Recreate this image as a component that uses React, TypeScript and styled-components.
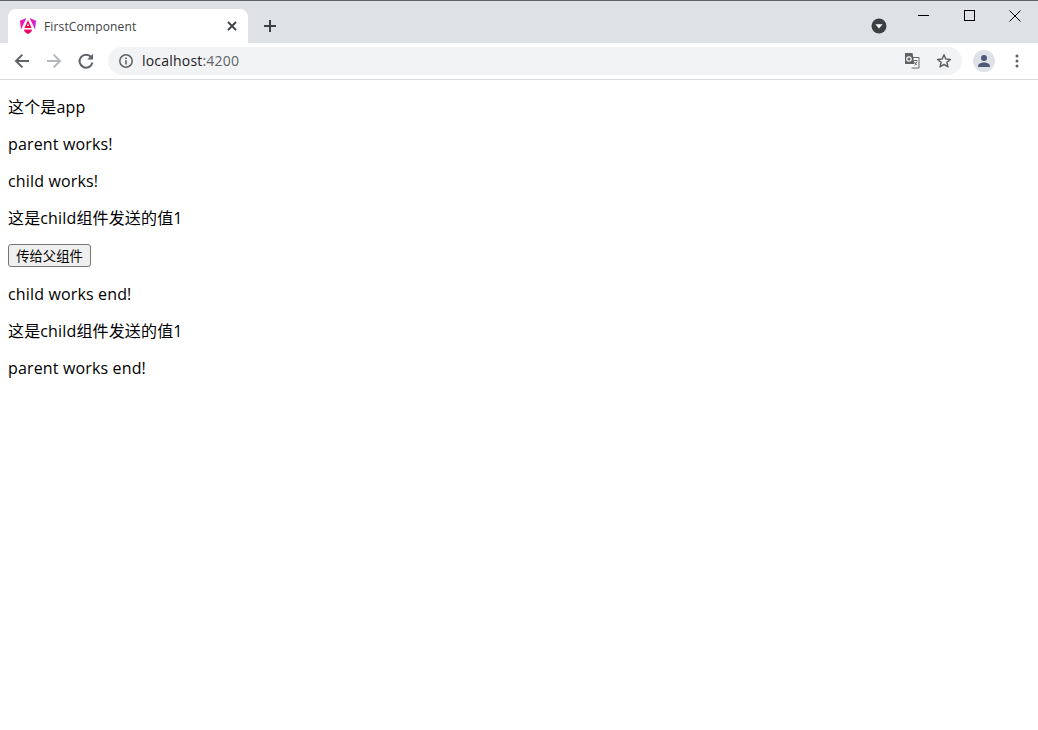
import styled, { createGlobalStyle } from "styled-components";

const GlobalStyle = createGlobalStyle`
  html, body {
    margin: 0;
    padding: 0;
    background: #fff;
  }
`;

const Browser = styled.div`
  width: 1038px;
  height: 730px;
  overflow: hidden;
  display: flex;
  flex-direction: column;
  background: #fff;
`;

const TabStrip = styled.div`
  height: 42px;
  flex: none;
  border-top: 1px solid #5f6368;
  background: #dee1e6;
  display: flex;
  align-items: flex-end;
  padding-left: 8px;
`;

const Tab = styled.div`
  width: 240px;
  height: 34px;
  background: #fff;
  border-radius: 8px 8px 0 0;
  display: flex;
  align-items: center;
  padding: 0 7px 0 11px;
  box-sizing: border-box;
  gap: 7px;
`;

const TabTitle = styled.span`
  flex: 1;
  font: 12px "Open Sans", "Liberation Sans", sans-serif;
  color: #3c4043;
  letter-spacing: 0.15px;
`;

const IconSlot = styled.span<{ $w?: number }>`
  width: ${(p) => p.$w ?? 18}px;
  height: 18px;
  flex: none;
  display: flex;
  align-items: center;
  justify-content: center;
`;

const NewTab = styled(IconSlot)`
  margin: 0 0 8px 13px;
`;

const StripRight = styled.div`
  margin-left: auto;
  align-self: stretch;
  display: flex;
  align-items: flex-start;
`;

const SearchTabs = styled(IconSlot)`
  margin: 16px 12px 0 0;
`;

const WindowButton = styled.span`
  width: 46px;
  height: 29px;
  display: flex;
  align-items: center;
  justify-content: center;
`;

const Toolbar = styled.div`
  height: 37px;
  flex: none;
  box-sizing: border-box;
  border-bottom: 1px solid #dadce0;
  display: flex;
  align-items: center;
  padding: 0 10px 0 13px;
  background: #fff;
`;

const NavGroup = styled.div`
  display: flex;
  align-items: center;
  gap: 14px;
`;

const Omnibox = styled.div`
  width: 854px;
  height: 28px;
  margin-left: 13px;
  border-radius: 14px;
  background: #f1f3f4;
  display: flex;
  align-items: center;
  padding: 0 10px;
  box-sizing: border-box;
`;

const Url = styled.span`
  flex: 1;
  margin-left: 8px;
  font: 14px/28px "Open Sans", "Liberation Sans", sans-serif;
  letter-spacing: 0.2px;
  color: #202124;
`;

const Port = styled.span`
  color: #5f6368;
`;

const OmniActions = styled.div`
  display: flex;
  align-items: center;
  gap: 16px;
`;

const Avatar = styled.span`
  width: 22px;
  height: 22px;
  margin-left: 11px;
  border-radius: 50%;
  background: #dee1e6;
  display: flex;
  align-items: center;
  justify-content: center;
  flex: none;
`;

const MenuDots = styled(IconSlot)`
  margin-left: 14px;
  width: 16px;
`;

const Page = styled.main`
  flex: 1;
  padding: 17px 8px 0;
  font-family: "Open Sans", "Noto Sans CJK SC", sans-serif;
  font-size: 16px;
  line-height: 21px;
  letter-spacing: 0.15px;
  color: #000;
`;

const Line = styled.p`
  margin: 0 0 16px;
`;

const SendButton = styled.button`
  display: block;
  width: 83px;
  height: 23px;
  margin: -1px 0 17px;
  padding: 0;
  border: 1px solid #767676;
  border-radius: 3px;
  background: #efefef;
  color: #000;
  font: 13.33px "Open Sans", "Noto Sans CJK SC", sans-serif;
`;

const AngularLogo = () => (
  <svg width="18" height="18" viewBox="0 0 18 18">
    <defs>
      <linearGradient id="ngWing" x1="0" y1="0" x2="1" y2="0">
        <stop offset="0" stopColor="#f5129f" />
        <stop offset="0.6" stopColor="#e91ec0" />
        <stop offset="1" stopColor="#9a2cf2" />
      </linearGradient>
      <linearGradient id="ngCore" x1="0" y1="1" x2="0" y2="0">
        <stop offset="0" stopColor="#e4003a" />
        <stop offset="1" stopColor="#f5128a" />
      </linearGradient>
    </defs>
    <path fill="url(#ngWing)" d="M1 3.8 7.4 1 2 12.6z" />
    <path fill="url(#ngWing)" d="M10.6 1 17 3.8 16 12.6z" />
    <path fill="url(#ngCore)" d="M9 3 12.6 11H5.4z" />
    <path fill="#fff" d="M9 6.6 7.9 9H10.1z" />
    <path fill="url(#ngCore)" d="M4.8 12.4H13.2L12.2 15 9 17 5.8 15z" />
  </svg>
);

const CloseTabIcon = () => (
  <svg width="12" height="12" viewBox="0 0 12 12">
    <path d="M2 2 10 10M10 2 2 10" stroke="#3c4043" strokeWidth="1.8" />
  </svg>
);

const PlusIcon = () => (
  <svg width="14" height="14" viewBox="0 0 14 14">
    <path d="M7 1V13M1 7H13" stroke="#3c4043" strokeWidth="2" />
  </svg>
);

const SearchTabsIcon = () => (
  <svg width="16" height="16" viewBox="0 0 16 16">
    <circle cx="8" cy="8" r="7.5" fill="#3c4043" />
    <path d="M4.4 6.3H11.6L8 10.6z" fill="#fff" />
  </svg>
);

const MinimizeIcon = () => (
  <svg width="11" height="11" viewBox="0 0 11 11">
    <path d="M0 5.5H11" stroke="#000" strokeWidth="1" />
  </svg>
);

const MaximizeIcon = () => (
  <svg width="11" height="11" viewBox="0 0 11 11">
    <rect x="0.5" y="0.5" width="10" height="10" fill="none" stroke="#000" />
  </svg>
);

const CloseWindowIcon = () => (
  <svg width="12" height="12" viewBox="0 0 12 12">
    <path d="M.5 .5 11.5 11.5M11.5 .5 .5 11.5" stroke="#000" strokeWidth="1" />
  </svg>
);

const ArrowIcon = ({ color, flip }: { color: string; flip?: boolean }) => (
  <svg width="18" height="18" viewBox="0 0 18 18">
    <g transform={flip ? "matrix(-1 0 0 1 18 0)" : undefined}>
      <path d="M16 9H3.5M9.4 2.6 3 9l6.4 6.4" fill="none" stroke={color} strokeWidth="2" />
    </g>
  </svg>
);

const ReloadIcon = () => (
  <svg width="18" height="18" viewBox="0 0 18 18">
    <path d="M14.2 5.2A6.5 6.5 0 1 0 15.4 10.5" fill="none" stroke="#5f6368" strokeWidth="2" />
    <path d="M16 1.8V7.6H10.2z" fill="#5f6368" />
  </svg>
);

const InfoIcon = () => (
  <svg width="16" height="16" viewBox="0 0 16 16">
    <circle cx="8" cy="8" r="6.2" fill="none" stroke="#5f6368" strokeWidth="1.5" />
    <path d="M7.2 7.2H8.8V11.5H7.2zM7.2 4.5H8.8V6H7.2z" fill="#5f6368" />
  </svg>
);

const TranslateIcon = () => (
  <svg width="16" height="16" viewBox="0 0 16 16">
    <path d="M6.5 4.5H15V15H7.5" fill="#fff" stroke="#5f6368" strokeWidth="1" />
    <path d="M1 0H8.5L10.5 11H1z" fill="#5f6368" />
    <circle cx="5" cy="6" r="2.2" fill="none" stroke="#fff" strokeWidth="1.2" />
    <path d="M10 7.5H13.5M11.8 7V8M10.6 12.5 13 8.5M10.6 9 13 12.5" stroke="#5f6368" strokeWidth="0.9" fill="none" />
  </svg>
);

const StarIcon = () => (
  <svg width="16" height="16" viewBox="0 0 16 16">
    <path
      d="M8 1.8 9.8 6l4.6.4-3.5 3 1.1 4.5L8 11.5 4 13.9l1.1-4.5-3.5-3L6.2 6z"
      fill="none"
      stroke="#5f6368"
      strokeWidth="1.5"
      strokeLinejoin="round"
    />
  </svg>
);

const PersonIcon = () => (
  <svg width="14" height="14" viewBox="0 0 14 14">
    <circle cx="7" cy="4" r="3" fill="#4d5a75" />
    <path d="M1 13C1 9.8 4 8.6 7 8.6S13 9.8 13 13z" fill="#4d5a75" />
  </svg>
);

const DotsIcon = () => (
  <svg width="4" height="14" viewBox="0 0 4 14">
    <circle cx="2" cy="2" r="1.5" fill="#5f6368" />
    <circle cx="2" cy="7" r="1.5" fill="#5f6368" />
    <circle cx="2" cy="12" r="1.5" fill="#5f6368" />
  </svg>
);

export default function App() {
  return (
    <Browser>
      <GlobalStyle />
      <TabStrip>
        <Tab>
          <IconSlot>
            <AngularLogo />
          </IconSlot>
          <TabTitle>FirstComponent</TabTitle>
          <IconSlot>
            <CloseTabIcon />
          </IconSlot>
        </Tab>
        <NewTab>
          <PlusIcon />
        </NewTab>
        <StripRight>
          <SearchTabs>
            <SearchTabsIcon />
          </SearchTabs>
          <WindowButton>
            <MinimizeIcon />
          </WindowButton>
          <WindowButton>
            <MaximizeIcon />
          </WindowButton>
          <WindowButton>
            <CloseWindowIcon />
          </WindowButton>
        </StripRight>
      </TabStrip>
      <Toolbar>
        <NavGroup>
          <ArrowIcon color="#5f6368" />
          <ArrowIcon color="#b4b7bb" flip />
          <ReloadIcon />
        </NavGroup>
        <Omnibox>
          <InfoIcon />
          <Url>
            localhost<Port>:4200</Port>
          </Url>
          <OmniActions>
            <TranslateIcon />
            <StarIcon />
          </OmniActions>
        </Omnibox>
        <Avatar>
          <PersonIcon />
        </Avatar>
        <MenuDots>
          <DotsIcon />
        </MenuDots>
      </Toolbar>
      <Page>
        <Line>这个是app</Line>
        <Line>parent works!</Line>
        <Line>child works!</Line>
        <Line>这是child组件发送的值1</Line>
        <SendButton>传给父组件</SendButton>
        <Line>child works end!</Line>
        <Line>这是child组件发送的值1</Line>
        <Line>parent works end!</Line>
      </Page>
    </Browser>
  );
}
